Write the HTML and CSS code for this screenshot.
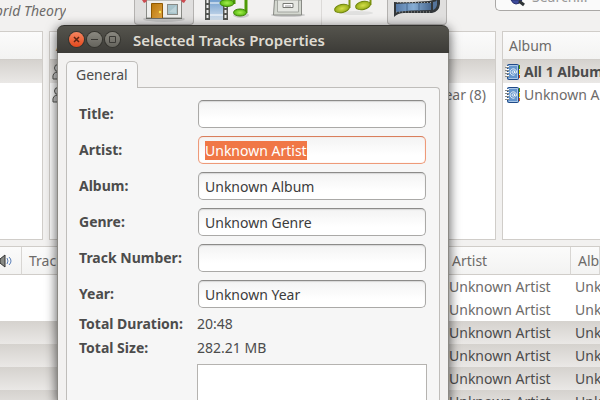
FILE: index.html
```html
<!DOCTYPE html>
<html lang="en">
<head>
<meta charset="utf-8">
<title>Selected Tracks Properties</title>
<link rel="stylesheet" href="styles.css">
</head>
<body>
<svg class="defs" aria-hidden="true">
  <defs>
    <linearGradient id="door" x1="0" y1="0" x2="1" y2="1"><stop offset="0" stop-color="#b97707"/><stop offset="1" stop-color="#dfa246"/></linearGradient>
    <linearGradient id="film" x1="0" y1="0" x2="0" y2="1"><stop offset="0" stop-color="#729fcf"/><stop offset="1" stop-color="#d5e2ef"/></linearGradient>
    <linearGradient id="strip" x1="0" y1="0" x2="1" y2="0"><stop offset="0" stop-color="#5578a5"/><stop offset=".5" stop-color="#86add4"/><stop offset="1" stop-color="#48678e"/></linearGradient>
    <radialGradient id="green"><stop offset="0" stop-color="#a5ef4c"/><stop offset="1" stop-color="#55b810"/></radialGradient>
    <radialGradient id="olive"><stop offset="0" stop-color="#d4df4a"/><stop offset="1" stop-color="#95ab17"/></radialGradient>
    <symbol id="book" viewBox="0 0 16 16">
      <path d="M13 1h2v14h-2z" fill="#eee"/><path d="M14.500 1v4" stroke="#4e9a06"/><path d="M14.500 6v4" stroke="#edd400"/><path d="M14.500 11v3" stroke="#e0501a"/>
      <rect x="2.500" y=".5" width="11" height="15" rx="1" fill="#6596cd" stroke="#204a87"/>
      <path d="M4 1.500h8.500v13H4" fill="none" stroke="#a9c6e6"/>
      <path d="M0 3.500h4M0 6.500h4M0 9.500h4M0 12.500h4" stroke="#888a85"/><path d="M1 2.500h3M1 5.500h3M1 8.500h3M1 11.500h3" stroke="#fff"/>
      <circle cx="8.300" cy="8" r="1.300" fill="none" stroke="#fff" stroke-width=".8"/><path d="M9.700 6.500v2.500q1.800 .8 1.800-1a3.200 3.200 0 1 0-1.800 2.900" fill="none" stroke="#fff" stroke-width=".8"/>
    </symbol>
    <symbol id="person" viewBox="0 0 16 16"><circle cx="6" cy="4" r="3.500" fill="#ddd" stroke="#555753"/><path d="M1 15q-1-7 5-7t6 7z" fill="#ccc" stroke="#555753"/></symbol>
  </defs>
</svg>
<main class="app">
  <header class="toolbar">
    <p class="now-playing"><em>Hybrid Theory</em></p>
    <button class="tool active home" aria-label="Home">
      <svg width="44" height="24"><ellipse cx="22" cy="19" rx="21" ry="3" fill="#c4c4c4"/><path d="M4.500 0h35v18h-35z" fill="#eeeeec" stroke="#888a85"/><path d="M4 18.500h36" stroke="#6b6d69"/><path d="M0 0h5l-1 2-2 1zM39 0h5l-2 3-2-1z" fill="#cc4b50"/><path d="M9.500 18V3.500h11V18" fill="url(#door)" stroke="#8f5902"/><circle cx="18" cy="12" r="1.200" fill="#fce94f"/><rect x="25.500" y="4.500" width="10" height="10" fill="#a7c3ca" stroke="#888a85"/><path d="M27 12l7-6v7z" fill="#bdd3d8"/></svg>
    </button>
    <button class="tool media" aria-label="Video and music">
      <svg width="48" height="24"><path d="M2 0h23v20H2z" fill="url(#film)"/><path d="M2 0h5v20H2zM20 0h5v20h-5z" fill="#555753"/><path d="M4.500 0v20M22.500 0v20" stroke="#eee" stroke-width="2" stroke-dasharray="3 2"/><path d="M7 3h13M7 15h13" stroke="#fff"/><ellipse cx="38" cy="15" rx="8" ry="3" fill="#ccc"/><path d="M31 0v4M43 0v13" stroke="#4e9a06" stroke-width="3"/><ellipse cx="24" cy="3" rx="7" ry="3.500" fill="url(#green)" stroke="#3f8208"/><ellipse cx="37" cy="12.500" rx="6.500" ry="3.500" fill="url(#green)" stroke="#3f8208"/></svg>
    </button>
    <button class="tool archive" aria-label="Archive">
      <svg width="34" height="24"><ellipse cx="17" cy="15" rx="17" ry="2" fill="#ccc"/><path d="M3.500 0h27v15h-28z" fill="#d3d7cf" stroke="#888a85"/><path d="M6.500 0h21v12h-21z" fill="#e4e6e1" stroke="#a5a8a2"/><path d="M12 3.500h10v4H12z" fill="#fff" stroke="#777974"/><path d="M14 6h6" stroke="#999"/></svg>
    </button>
    <span class="separator"></span>
    <button class="tool notes" aria-label="Music">
      <svg width="42" height="24"><ellipse cx="24" cy="13" rx="17" ry="2" fill="#e0e0df"/><path d="M17.500 0v8M38.500 0v5" stroke="#7f9610" stroke-width="2"/><ellipse cx="10" cy="8.500" rx="7.500" ry="4" fill="url(#olive)" stroke="#70860d" transform="rotate(-12 10 8.500)"/><ellipse cx="31" cy="5.500" rx="7.500" ry="4" fill="url(#olive)" stroke="#70860d" transform="rotate(-12 31 5.500)"/></svg>
    </button>
    <button class="tool active film" aria-label="Film">
      <svg width="50" height="24"><path d="M2 17V2q10 1 35-1l4-1h7v4q-1 8-8 9H12q-6 0-10 4z" fill="#33373a"/><path d="M4 4q15-1 35-1v7q-22 0-35 2z" fill="url(#strip)"/><path d="M15 3v8M27 3v8" stroke="#47698f"/><path d="M5 2.500h34M4 12h36" stroke="#9a9d98" stroke-dasharray="1 2"/><path d="M41 2q3 0 4-2v5q-1 4-4 5z" fill="#55749b"/></svg>
    </button>
    <label class="search"><svg width="24" height="8"><path d="M3 0h11q-2 4-6 4-3 0-5-4z" fill="#3c4a9b" stroke="#2b3270"/><path d="M11 1l5 4" stroke="#2e3436" stroke-width="3"/></svg><input type="text" placeholder="Search..." aria-label="Search"></label>
  </header>
  <div class="panes">
    <section class="pane"><h2 class="pane-head"></h2><div class="row selected"></div></section>
    <section class="pane"><h2 class="pane-head">Artist</h2>
      <div class="row selected"><svg width="16" height="16"><use href="#person"/></svg></div>
      <div class="row"><svg width="16" height="16"><use href="#person"/></svg><span class="end">Unknown Year (8)</span></div></section>
    <section class="pane"><h2 class="pane-head">Album</h2>
      <div class="row selected"><svg width="16" height="16"><use href="#book"/></svg><b>All 1 Albums (8)</b></div>
      <div class="row"><svg width="16" height="16"><use href="#book"/></svg><span>Unknown Album (8)</span></div></section>
  </div>
  <table class="tracks">
    <colgroup><col class="c-play"><col class="c-track"><col class="c-artist"><col></colgroup>
    <thead><tr><th aria-label="Playing"><svg width="14" height="14"><path d="M0 5l5-4v12l-5-4z" fill="#888a85" stroke="#333"/><path d="M7 4q2 3 0 6M9 3q4 4 0 8" fill="none" stroke="#5b7fb8"/></svg></th><th>Track</th><th>Artist</th><th>Album</th></tr></thead>
    <tbody>
      <tr><td></td><td></td><td>Unknown Artist</td><td>Unknown</td></tr>
      <tr><td></td><td></td><td>Unknown Artist</td><td>Unknown</td></tr>
      <tr class="selected"><td></td><td></td><td>Unknown Artist</td><td>Unknown</td></tr>
      <tr class="selected"><td></td><td></td><td>Unknown Artist</td><td>Unknown</td></tr>
      <tr class="selected"><td></td><td></td><td>Unknown Artist</td><td>Unknown</td></tr>
      <tr class="selected"><td></td><td></td><td>Unknown Artist</td><td>Unknown</td></tr>
    </tbody>
  </table>
</main>
<section class="dialog" role="dialog" aria-labelledby="dialog-title">
  <header class="titlebar">
    <button class="win close" aria-label="Close"><svg width="15" height="15"><path d="M5 5l5 5M10 5l-5 5" stroke="#5a2413" stroke-width="1.500"/></svg></button>
    <button class="win" aria-label="Minimize"><svg width="15" height="15"><path d="M4 7.500h7" stroke="#3a3935"/></svg></button>
    <button class="win" aria-label="Maximize"><svg width="15" height="15"><path d="M4.500 4.500h6v6h-6z" fill="none" stroke="#3a3935"/></svg></button>
    <h1 id="dialog-title">Selected Tracks Properties</h1>
  </header>
  <div class="body">
    <button class="tab" role="tab" aria-selected="true">General</button>
    <form class="sheet">
      <label for="title">Title:</label><input id="title" type="text">
      <label for="artist">Artist:</label><input id="artist" class="focused" type="text" value="Unknown Artist">
      <label for="album">Album:</label><input id="album" type="text" value="Unknown Album">
      <label for="genre">Genre:</label><input id="genre" type="text" value="Unknown Genre">
      <label for="number">Track Number:</label><input id="number" type="text">
      <label for="year">Year:</label><input id="year" type="text" value="Unknown Year">
      <b class="fact">Total Duration:</b><span class="fact">20:48</span>
      <b class="fact">Total Size:</b><span class="fact">282.21 MB</span>
      <textarea aria-label="Files"></textarea>
    </form>
  </div>
</section>
<script src="focus.js"></script>
</body>
</html>
```
FILE: focus.js
```js
const artist = document.getElementById("artist");
artist.focus();
artist.select();
```
FILE: styles.css
```css
* { box-sizing: border-box; }
body, h1, h2, p { margin: 0; }
body {
  height: 100vh;
  overflow: hidden;
  position: relative;
  background: #f2f1f0;
  color: #6d6b69;
  font: 14px/20px "Noto Sans", "Open Sans", sans-serif;
}
button, input, textarea { font: inherit; color: inherit; }
button { border: 0; padding: 0; background: none; }
svg { display: block; flex: none; }
.defs { position: absolute; width: 0; height: 0; }
.app { display: flex; flex-direction: column; height: 100%; }

.toolbar { display: flex; align-items: flex-start; height: 31px; flex: none; }
.now-playing { width: 66px; margin-right: 68px; padding-top: 1px; display: flex; justify-content: flex-end; overflow: hidden; white-space: nowrap; }
.tool { height: 25px; flex: none; display: flex; justify-content: center; align-items: flex-start; }
.active { width: 60px; border: 1px solid #b4b2b0; border-top: 0; border-radius: 0 0 4px 4px; background: #e0dfde; }
.media { width: 66px; }
.archive { width: 61px; padding-right: 6px; }
.separator { width: 1px; height: 25px; background: #dcdad8; }
.notes { width: 65px; padding-right: 4px; }
.search { display: flex; flex: 1; height: 11px; margin-left: 48px; padding-left: 12px; border: 1px solid #aaa8a6; border-width: 0 0 1px 1px; border-radius: 0 0 0 5px; background: #fafafa; overflow: hidden; }
.search input { border: 0; outline: 0; padding: 0; width: 60px; height: 20px; margin-top: -13px; background: none; }
.search input::placeholder { color: #999; opacity: 1; }

.panes { display: grid; grid-template-columns: 43px 1fr 98px; gap: 6px; height: 209px; flex: none; }
.pane { min-width: 0; overflow: hidden; background: #fff; border: 1px solid #d0cdc9; white-space: nowrap; }
.pane:first-child { border-left: 0; }
.pane:last-child { border-right: 0; }
.pane-head { height: 28px; padding: 4px 6px; border-bottom: 1px solid #d0cdc9; background: linear-gradient(#fbfbfb, #f3f3f2); font-size: 14px; font-weight: 400; }
.row { display: flex; align-items: center; gap: 3px; height: 23px; padding: 0 9px 0 2px; }
.selected { background: linear-gradient(#d5d2ce, #eae8e6); color: #4c4c4c; }
.end { margin-left: auto; }

.tracks { width: 100%; margin-top: 6px; table-layout: fixed; border-spacing: 0; border-top: 1px solid #d0cdc9; background: #fff; white-space: nowrap; }
.c-play { width: 22px; }
.c-track { width: 423px; }
.c-artist { width: 126px; }
.tracks th { height: 28px; padding: 0 7px; border-right: 1px solid #d8d6d3; border-bottom: 1px solid #d0cdc9; background: linear-gradient(#fbfbfb, #f3f3f2); text-align: left; font-weight: 400; overflow: hidden; }
.tracks th:first-child { padding: 0; }
.tracks td { height: 23px; padding: 0 4px; overflow: hidden; }

.dialog {
  position: absolute;
  inset: 25px 151px 0 57px;
  display: flex;
  flex-direction: column;
  border: 1px solid #8b8984;
  border-width: 0 1px;
  border-radius: 7px 7px 0 0;
  background: #f2f1f0;
  color: #4c4c4c;
  box-shadow: 0 3px 11px 1px rgba(0, 0, 0, .6);
}
.titlebar { display: flex; align-items: center; gap: 3px; height: 28px; flex: none; margin: 0 -1px; padding: 0 12px; border-top: 1px solid #33322e; border-radius: 7px 7px 0 0; background: linear-gradient(#55544d, #3c3b37); color: #dfdbd2; }
.win { width: 15px; height: 15px; border-radius: 50%; background: linear-gradient(#8a8880, #65645d); box-shadow: 0 0 0 1px #35342f; }
.close { background: linear-gradient(#f58560, #e3481c); }
h1 { margin-left: 10px; font-size: 15px; line-height: 18px; font-weight: 600; white-space: nowrap; }
.body { display: flex; flex-direction: column; flex: 1; min-height: 0; padding: 8px 8px 0; overflow: hidden; }
.tab { position: relative; align-self: flex-start; flex: none; z-index: 1; height: 27px; margin-bottom: -1px; padding: 0 9px; border: 1px solid #bfbdba; border-bottom: 0; border-radius: 5px 5px 0 0; background: #f6f6f6; }
.sheet {
  display: grid;
  grid-template-columns: 110px 1fr;
  grid-template-rows: repeat(6, 28px) 16px 16px 60px;
  column-gap: 8px;
  row-gap: 8px;
  align-items: center;
  flex: 1;
  padding: 12px 12px 0;
  border: 1px solid #bfbdba;
  border-bottom: 0;
  border-radius: 0 4px 0 0;
  background: #f6f6f6;
}
.sheet label, b { font-weight: 700; white-space: nowrap; }
.sheet input { height: 28px; margin: 0 1px; padding: 0 6px; border: 1px solid #aaa9a7; border-top-color: #8c8b89; border-radius: 5px; outline: 0; background: linear-gradient(#f3f3f3, #fff 70%); color: #3c3c3c; box-shadow: inset 0 1px 1px #d8d8d8; }
.sheet .focused { border-color: #ee9a79; border-top-color: #d97e5c; box-shadow: inset 0 0 1px #f3b49c; }
::selection { background: #f07746; color: #fff; }
.fact { line-height: 16px; }
textarea { grid-column: 2; width: 100%; height: 60px; border: 1px solid #b5b3b0; outline: 0; resize: none; background: #fff; }
```
